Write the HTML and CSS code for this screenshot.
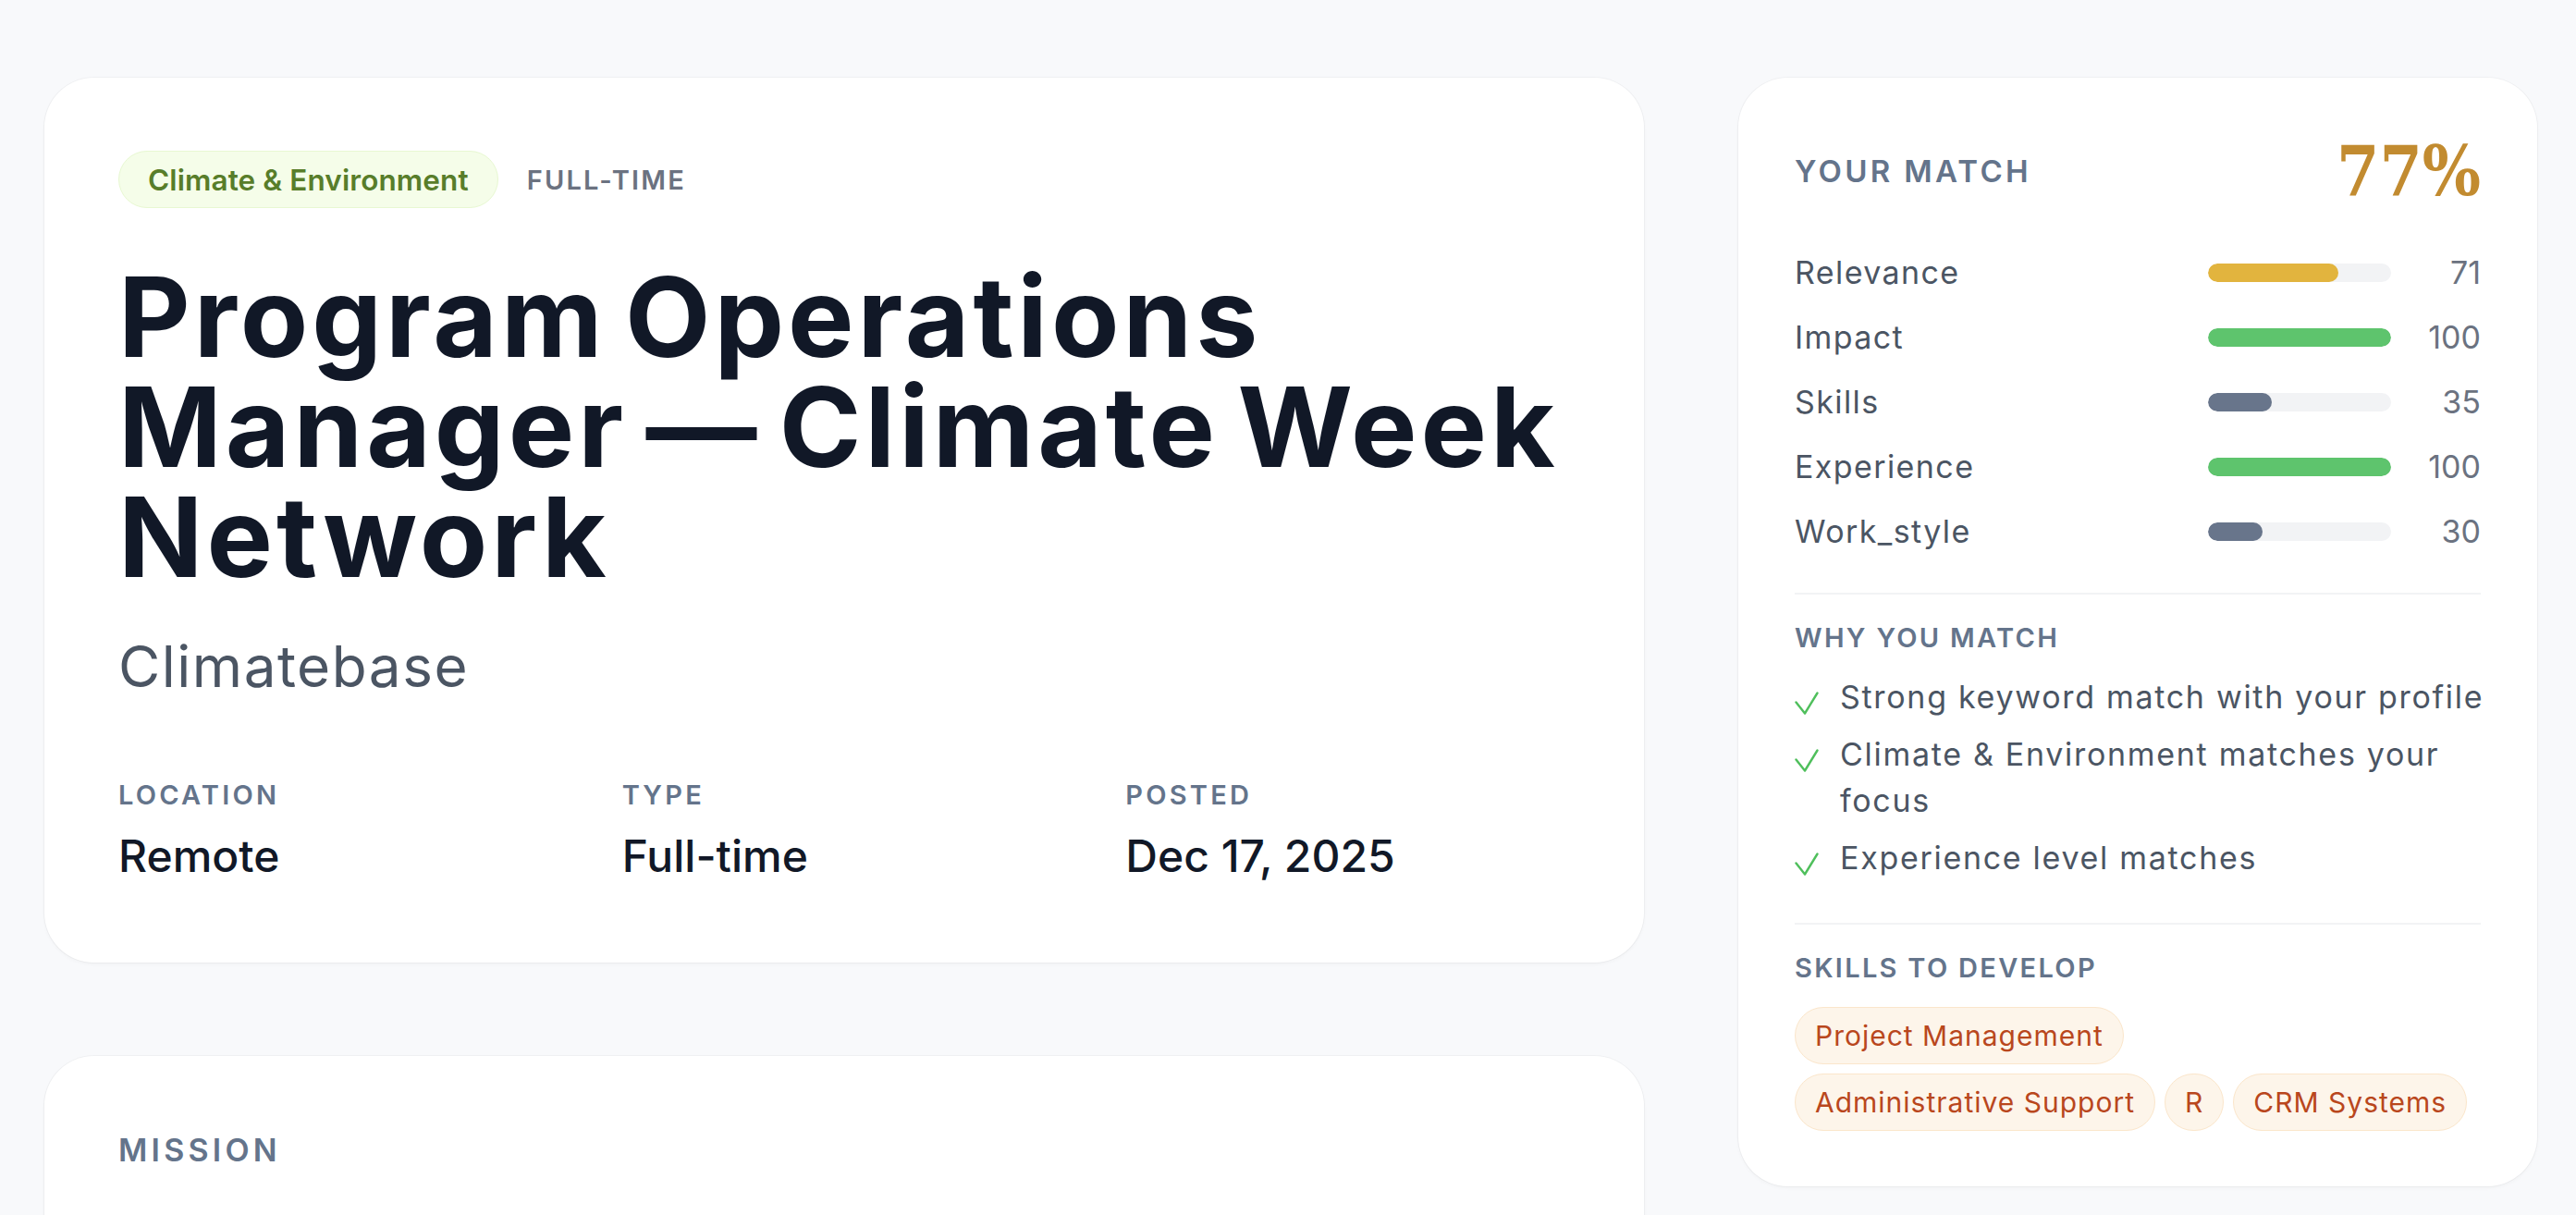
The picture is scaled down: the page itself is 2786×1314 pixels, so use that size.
FILE: index.html
```html
<!DOCTYPE html>
<html lang="en">
<head>
<meta charset="utf-8">
<title>Program Operations Manager — Climate Week Network</title>
<link rel="stylesheet" href="styles.css">
</head>
<body>
<div class="page">
  <main class="main-col">
    <section class="card job-card">
      <div class="tags">
        <span class="pill-cat">Climate &amp; Environment</span>
        <span class="job-type">FULL-TIME</span>
      </div>
      <h1 class="title">Program Operations Manager — Climate Week Network</h1>
      <div class="company">Climatebase</div>
      <div class="meta">
        <div class="meta-item">
          <div class="meta-label">LOCATION</div>
          <div class="meta-value">Remote</div>
        </div>
        <div class="meta-item">
          <div class="meta-label">TYPE</div>
          <div class="meta-value">Full-time</div>
        </div>
        <div class="meta-item">
          <div class="meta-label">POSTED</div>
          <div class="meta-value">Dec 17, 2025</div>
        </div>
      </div>
    </section>
    <section class="card mission-card">
      <h2 class="section-title mission-title">MISSION</h2>
    </section>
  </main>

  <aside class="card match-card">
    <div class="match-head">
      <h2 class="section-title">YOUR MATCH</h2>
      <div class="match-score">77%</div>
    </div>
    <div class="score-rows">
      <div class="score-row">
        <span class="score-label">Relevance</span>
        <span class="bar"><span class="bar-fill fill-yellow" style="width:71%"></span></span>
        <span class="score-num">71</span>
      </div>
      <div class="score-row">
        <span class="score-label">Impact</span>
        <span class="bar"><span class="bar-fill fill-green" style="width:100%"></span></span>
        <span class="score-num">100</span>
      </div>
      <div class="score-row">
        <span class="score-label">Skills</span>
        <span class="bar"><span class="bar-fill fill-slate" style="width:35%"></span></span>
        <span class="score-num">35</span>
      </div>
      <div class="score-row">
        <span class="score-label">Experience</span>
        <span class="bar"><span class="bar-fill fill-green" style="width:100%"></span></span>
        <span class="score-num">100</span>
      </div>
      <div class="score-row">
        <span class="score-label">Work_style</span>
        <span class="bar"><span class="bar-fill fill-slate" style="width:30%"></span></span>
        <span class="score-num">30</span>
      </div>
    </div>

    <div class="match-section">
      <h3 class="sub-title">WHY YOU MATCH</h3>
      <ul class="reasons">
        <li class="reason">
          <svg class="check" viewBox="0 0 26 26" width="26" height="26" aria-hidden="true"><path d="M1.5 11.5 L11 23.5 L24.5 1.5" fill="none" stroke="#4fbf5c" stroke-width="2.4" stroke-linecap="round" stroke-linejoin="round"/></svg>
          <span>Strong keyword match with your profile</span>
        </li>
        <li class="reason">
          <svg class="check" viewBox="0 0 26 26" width="26" height="26" aria-hidden="true"><path d="M1.5 11.5 L11 23.5 L24.5 1.5" fill="none" stroke="#4fbf5c" stroke-width="2.4" stroke-linecap="round" stroke-linejoin="round"/></svg>
          <span>Climate &amp; Environment matches your focus</span>
        </li>
        <li class="reason">
          <svg class="check" viewBox="0 0 26 26" width="26" height="26" aria-hidden="true"><path d="M1.5 11.5 L11 23.5 L24.5 1.5" fill="none" stroke="#4fbf5c" stroke-width="2.4" stroke-linecap="round" stroke-linejoin="round"/></svg>
          <span>Experience level matches</span>
        </li>
      </ul>
    </div>

    <div class="match-section">
      <h3 class="sub-title">SKILLS TO DEVELOP</h3>
      <div class="skills">
        <span class="skill">Project Management</span>
        <span class="skill">Administrative Support</span>
        <span class="skill">R</span>
        <span class="skill">CRM Systems</span>
      </div>
    </div>
  </aside>
</div>
</body>
</html>
```
FILE: styles.css
```css
* { box-sizing: border-box; }

html, body {
  margin: 0;
  padding: 0;
  background: #f8f9fb;
  font-family: "Inter", "Liberation Sans", sans-serif;
  color: #111827;
  overflow: hidden;
}

.page {
  display: grid;
  grid-template-columns: 1730px 864px;
  column-gap: 102px;
  align-items: start;
  padding: 84px 42px 0 48px;
}

.main-col {
  display: flex;
  flex-direction: column;
  gap: 101px;
}

.card {
  background: #ffffff;
  border-radius: 54px;
  box-shadow: 0 0 0 1px rgba(16, 24, 40, 0.035), 0 2px 4px rgba(16, 24, 40, 0.03);
}

/* ---------- job card ---------- */
.job-card {
  padding: 79px 80px 84px 80px;
}

.tags {
  display: flex;
  align-items: center;
  gap: 31px;
}

.pill-cat {
  display: inline-flex;
  align-items: center;
  height: 62px;
  padding: 0 31px;
  border-radius: 31px;
  background: #f5fde9;
  border: 1.5px solid #e8f8d2;
  color: #587d2a;
  font-size: 31.5px;
  font-weight: 600;
  letter-spacing: 0.1px;
}

.job-type {
  color: #6b7280;
  font-size: 29px;
  font-weight: 600;
  letter-spacing: 2.2px;
}

.title {
  margin: 58px 0 0 0;
  font-size: 120px;
  line-height: 119px;
  font-weight: 700;
  letter-spacing: 4px;
  word-spacing: -12px;
  color: #111827;
}

.company {
  margin-top: 39px;
  font-size: 62px;
  line-height: 84px;
  font-weight: 400;
  letter-spacing: 1.5px;
  color: #4b5563;
}

.meta {
  margin-top: 77px;
  display: grid;
  grid-template-columns: repeat(3, 1fr);
  column-gap: 64px;
}

.meta-label {
  font-size: 29px;
  line-height: 40px;
  font-weight: 600;
  letter-spacing: 3.2px;
  color: #64748b;
}

.meta-value {
  margin-top: 15px;
  font-size: 48px;
  line-height: 62px;
  font-weight: 500;
  color: #111827;
}

/* ---------- mission card ---------- */
.mission-card {
  padding: 79px 80px;
  min-height: 420px;
}

.section-title {
  margin: 0;
  font-size: 33px;
  line-height: 46px;
  font-weight: 600;
  letter-spacing: 3.3px;
  color: #64748b;
}

.mission-title {
  font-size: 34px;
  letter-spacing: 4.2px;
}

/* ---------- match card ---------- */
.match-card {
  padding: 61px 61px 60px 61px;
}

.match-head {
  display: flex;
  align-items: center;
  justify-content: space-between;
  height: 80px;
}

.match-score {
  font-family: "DejaVu Serif Condensed", "DejaVu Serif", serif;
  font-stretch: condensed;
  font-weight: 700;
  font-size: 74px;
  line-height: 80px;
  color: #c28b30;
}

.score-rows {
  margin-top: 48px;
  display: flex;
  flex-direction: column;
  gap: 27px;
}

.score-row {
  display: flex;
  align-items: center;
  height: 43px;
}

.score-label {
  flex: 1;
  font-size: 34px;
  line-height: 43px;
  color: #4b5563;
  letter-spacing: 1.4px;
}

.bar {
  display: block;
  width: 198px;
  height: 20px;
  border-radius: 10px;
  background: #f2f3f5;
  overflow: hidden;
}

.bar-fill {
  display: block;
  height: 100%;
  border-radius: 10px;
}

.fill-yellow { background: #e2b43e; }
.fill-green { background: #5ec46d; }
.fill-slate { background: #68758b; }

.score-num {
  width: 97px;
  text-align: right;
  font-size: 34px;
  line-height: 43px;
  color: #6b7280;
}

.match-section {
  margin-top: 45px;
  border-top: 2px solid #f2f3f5;
  padding-top: 25px;
}

.sub-title {
  margin: 0;
  font-size: 29px;
  line-height: 44px;
  font-weight: 600;
  letter-spacing: 2.3px;
  color: #64748b;
}

.reasons {
  list-style: none;
  margin: 17px 0 0 0;
  padding: 0;
  display: flex;
  flex-direction: column;
  gap: 12px;
}

.reason {
  display: flex;
  align-items: flex-start;
  gap: 23px;
  font-size: 34px;
  line-height: 50px;
  letter-spacing: 1.7px;
  color: #4b5563;
  margin-right: -20px;
}

.check {
  flex: none;
  margin-top: 19px;
}

.skills {
  margin-top: 20px;
  display: flex;
  flex-wrap: wrap;
  gap: 10px;
}

.skill {
  display: inline-flex;
  align-items: center;
  height: 62px;
  padding: 0 21px;
  border-radius: 31px;
  background: #fdf5ea;
  border: 1.5px solid #fbe6cb;
  color: #b9471d;
  font-size: 30px;
  letter-spacing: 1px;
}
```
